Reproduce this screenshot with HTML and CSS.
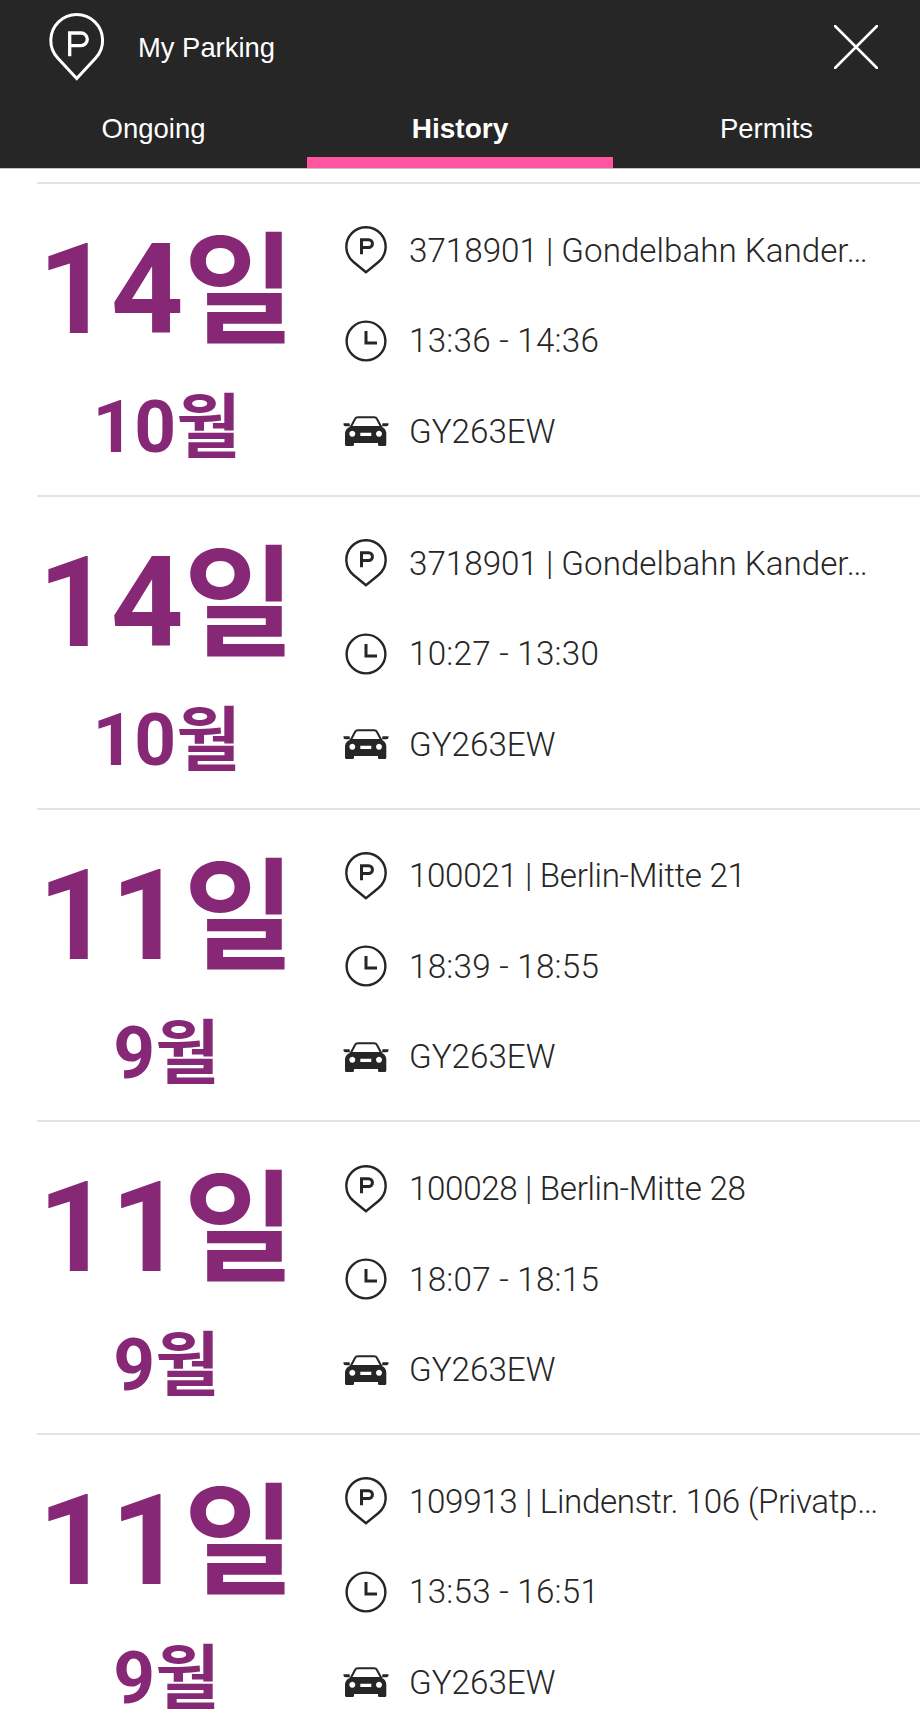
FILE: index.html
```html
<!DOCTYPE html>
<html lang="en">
<head>
<meta charset="utf-8">
<title>My Parking</title>
<link rel="stylesheet" href="styles.css">
</head>
<body>
<svg class="defs" width="0" height="0" aria-hidden="true">
  <symbol id="pin" viewBox="0 0 46 48">
    <path d="M23 46.300 10.500 36A19.650 19.650 0 1 1 35.500 36Z" fill="none" stroke="currentColor" stroke-width="2.400"/>
    <path d="M18.500 28.300V13.800H25.600a3.850 3.850 0 0 1 0 7.700H18.500" fill="none" stroke="currentColor" stroke-width="3"/>
  </symbol>
  <symbol id="clock" viewBox="0 0 46 48">
    <circle cx="23" cy="24" r="19.400" fill="none" stroke="currentColor" stroke-width="2.400"/>
    <path d="M23 14V26H34" fill="none" stroke="currentColor" stroke-width="3"/>
  </symbol>
  <symbol id="car" viewBox="0 0 46 48">
    <g transform="translate(0 9)">
      <path d="M0.500 7.200H6.500L7 10.300H2.500Q0.500 10.300 0.500 8.500ZM45.500 7.200H39.500L39 10.300H43.500Q45.500 10.300 45.500 8.500Z" fill="currentColor"/>
      <path d="M7.500 11.500 12 3Q12.800 1.200 15 1.200H31Q33.200 1.200 34 3L38.500 11.500" fill="none" stroke="currentColor" stroke-width="2"/>
      <path fill-rule="evenodd" fill="currentColor" d="M9 10H37Q43 12 43.300 17V28.500Q43.300 30 41.800 30H36.500Q35 30 35 28.500V27H11V28.500Q11 30 9.500 30H3.500Q2 30 2 28.500V17Q2.300 12 9 10ZM9.300 14.700a3 3 0 1 0 .01 0ZM36 14.700a3 3 0 1 0 .01 0ZM17.300 16.700V20H28.300V16.700Z"/>
    </g>
  </symbol>
</svg>

<div class="app">
  <header class="top">
    <div class="title-bar">
      <svg class="logo" viewBox="0 0 58 70">
        <path d="M28.700 66.500 9.700 46A25.900 25.900 0 1 1 47.700 46Z" fill="none" stroke="currentColor" stroke-width="3"/>
        <path d="M21.700 44.300V21H33a6.300 6.300 0 0 1 0 12.600H21.700" fill="none" stroke="currentColor" stroke-width="3.300"/>
      </svg>
      <span class="title">My Parking</span>
      <svg class="close" viewBox="0 0 44 44"><path d="M1 1 43 43M43 1 1 43" stroke="currentColor" stroke-width="2.600" fill="none" stroke-linecap="round"/></svg>
    </div>
    <nav class="tabs">
      <div class="tab">Ongoing</div>
      <div class="tab active">History</div>
      <div class="tab">Permits</div>
    </nav>
  </header>

  <main class="list">
    <article class="row">
      <div class="date"><div class="day"><span class="num">14</span>일</div><div class="month"><span class="num">10</span>월</div></div>
      <div class="info">
        <div class="line"><svg class="icon"><use href="#pin"/></svg><span class="text">3718901 | Gondelbahn Kander…</span></div>
        <div class="line"><svg class="icon"><use href="#clock"/></svg><span class="text time">13:36 - 14:36</span></div>
        <div class="line"><svg class="icon"><use href="#car"/></svg><span class="text">GY263EW</span></div>
      </div>
    </article>
    <article class="row">
      <div class="date"><div class="day"><span class="num">14</span>일</div><div class="month"><span class="num">10</span>월</div></div>
      <div class="info">
        <div class="line"><svg class="icon"><use href="#pin"/></svg><span class="text">3718901 | Gondelbahn Kander…</span></div>
        <div class="line"><svg class="icon"><use href="#clock"/></svg><span class="text time">10:27 - 13:30</span></div>
        <div class="line"><svg class="icon"><use href="#car"/></svg><span class="text">GY263EW</span></div>
      </div>
    </article>
    <article class="row">
      <div class="date"><div class="day"><span class="num">11</span>일</div><div class="month"><span class="num">9</span>월</div></div>
      <div class="info">
        <div class="line"><svg class="icon"><use href="#pin"/></svg><span class="text tight">100021 | Berlin-Mitte 21</span></div>
        <div class="line"><svg class="icon"><use href="#clock"/></svg><span class="text time">18:39 - 18:55</span></div>
        <div class="line"><svg class="icon"><use href="#car"/></svg><span class="text">GY263EW</span></div>
      </div>
    </article>
    <article class="row">
      <div class="date"><div class="day"><span class="num">11</span>일</div><div class="month"><span class="num">9</span>월</div></div>
      <div class="info">
        <div class="line"><svg class="icon"><use href="#pin"/></svg><span class="text tight">100028 | Berlin-Mitte 28</span></div>
        <div class="line"><svg class="icon"><use href="#clock"/></svg><span class="text time">18:07 - 18:15</span></div>
        <div class="line"><svg class="icon"><use href="#car"/></svg><span class="text">GY263EW</span></div>
      </div>
    </article>
    <article class="row">
      <div class="date"><div class="day"><span class="num">11</span>일</div><div class="month"><span class="num">9</span>월</div></div>
      <div class="info">
        <div class="line"><svg class="icon"><use href="#pin"/></svg><span class="text tight">109913 | Lindenstr. 106 (Privatp…</span></div>
        <div class="line"><svg class="icon"><use href="#clock"/></svg><span class="text time">13:53 - 16:51</span></div>
        <div class="line"><svg class="icon"><use href="#car"/></svg><span class="text">GY263EW</span></div>
      </div>
    </article>
  </main>
</div>
</body>
</html>
```

FILE: styles.css
```css
* { box-sizing: border-box; }
html, body { margin: 0; padding: 0; }
body {
  width: 920px;
  height: 1734px;
  overflow: hidden;
  background: #fff;
  font-family: "Liberation Sans", "Noto Sans CJK KR", sans-serif;
}
.defs { display: block; height: 0; }
.app { display: flex; flex-direction: column; }

.top { background: #262626; color: #fff; height: 169px; border-bottom: 1px solid #c4c4c4; }
.title-bar {
  height: 96px;
  display: flex;
  align-items: center;
  padding: 0 42px 0 48px;
}
.logo { width: 58px; height: 70px; color: #fff; flex: none; margin-top: -2px; }
.title { font-size: 27.400px; margin-left: 32px; flex: 1; }
.close { width: 44px; height: 44px; color: #fff; flex: none; margin-top: -2px; }

.tabs { display: grid; grid-template-columns: 307px 306px 307px; height: 72px; }
.tab {
  display: flex;
  align-items: flex-start;
  justify-content: center;
  font-size: 27.500px;
  line-height: 36px;
  padding-top: 15px;
}
.tab.active { font-size: 28px; font-weight: 700; border-bottom: 11px solid #ff549f; }

.list { padding: 13px 0 0 37px; }
.row {
  height: 312.750px;
  border-top: 2px solid #e3e3e3;
  display: flex;
}
.date { width: 259px; flex: none; color: #862876; font-weight: 700; text-align: center; white-space: nowrap; }
.day { font-size: 121px; line-height: 126px; margin-top: 43px; }
.month { font-size: 70px; line-height: 72px; margin-top: 37px; }
.day .num { font-family: Roboto, "Liberation Sans", sans-serif; font-size: 127px; }
.month .num { font-family: Roboto, "Liberation Sans", sans-serif; font-size: 73px; }

.info { flex: 1; min-width: 0; margin-left: 47px; padding-top: 21px; }
.line {
  height: 90.500px;
  display: flex;
  align-items: center;
  color: #262626;
}
.icon { width: 46px; height: 48px; flex: none; }
.text {
  margin-left: 20px;
  font-family: Roboto, "Liberation Sans", sans-serif;
  font-size: 33.200px;
  font-weight: 300;
  white-space: nowrap;
  color: #262626;
}
.text.time { letter-spacing: 0.250px; }
.text.tight { letter-spacing: -0.350px; }
```
